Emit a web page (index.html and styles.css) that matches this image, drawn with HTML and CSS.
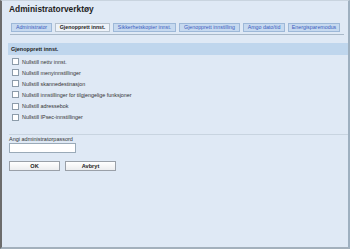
FILE: index.html
```html
<!DOCTYPE html>
<html>
<head>
<meta charset="utf-8">
<link rel="stylesheet" href="styles.css">
</head>
<body>
<div class="frame">
  <div class="title">Administratorverktøy</div>
  <div class="tabs">
    <span class="tab w41">Administrator</span>
    <span class="tab w55 active">Gjenopprett innst.</span>
    <span class="tab w63">Sikkerhetskopier innst.</span>
    <span class="tab w61">Gjenopprett innstilling</span>
    <span class="tab w42">Amgo dato/tid</span>
    <span class="tab w52">Energisparemodus</span>
  </div>
  <div class="band">Gjenopprett innst.</div>
  <div class="list">
    <div class="row"><span class="cb"></span>Nullstill nettv innst.</div>
    <div class="row"><span class="cb"></span>Nullstill menyinnstillinger</div>
    <div class="row"><span class="cb"></span>Nullstill skannedestinasjon</div>
    <div class="row"><span class="cb"></span>Nullstill innstillinger for tilgjengelige funksjoner</div>
    <div class="row"><span class="cb"></span>Nullstill adressebok</div>
    <div class="row"><span class="cb"></span>Nullstill IPsec-innstillinger</div>
  </div>
  <div class="sep"></div>
  <div class="pw">
    <div class="label">Angi administratorpassord</div>
    <div class="input"></div>
  </div>
  <div class="buttons">
    <span class="btn">OK</span>
    <span class="btn">Avbryt</span>
  </div>
</div>
</body>
</html>
```

FILE: styles.css
```css
html, body {
  margin: 0;
  padding: 0;
}
body {
  font-family: "Liberation Sans", Arial, sans-serif;
  background: #dfe9f5;
}
.frame {
  width: 350px;
  height: 249px;
  box-sizing: border-box;
  background: #dfe9f5;
  border-top: 1px solid #c9d4df;
  border-left: 2px solid #6c6c6c;
  border-right: 2px solid #9eb0c0;
  border-bottom: 2px solid #a3b0bc;
  display: flex;
  flex-direction: column;
}
.title {
  padding: 3px 0 0 7px;
  font-size: 8.4px;
  line-height: 11px;
  font-weight: bold;
  color: #1e1e1e;
}
.tabs {
  display: flex;
  gap: 3px;
  margin: 8px 4px 0 8px;
  padding: 0 0 2px 1px;
  border-bottom: 1px solid #a9b9c9;
}
.tab {
  box-sizing: border-box;
  flex: none;
  height: 9px;
  line-height: 7px;
  padding: 0;
  text-align: center;
  font-size: 5.3px;
  color: #3a5cc0;
  background: #c6d9ef;
  border: 1px solid #9db8d8;
  white-space: nowrap;
}
.w41 { width: 41px; }
.w55 { width: 55px; }
.w63 { width: 63px; }
.w61 { width: 61px; }
.w42 { width: 42px; }
.w52 { width: 52px; }
.tab.active {
  background: #eef3f9;
  color: #222;
  font-weight: bold;
  border-color: #b6c2ce;
}
.band {
  margin: 8px 0 0 6px;
  height: 12px;
  line-height: 12px;
  padding-left: 3px;
  background: #bfd6ed;
  font-size: 5.5px;
  font-weight: bold;
  color: #222;
}
.list {
  padding: 1px 0 0 10px;
}
.row {
  height: 11.15px;
  display: flex;
  align-items: center;
  gap: 3px;
  font-size: 5.4px;
  color: #333;
}
.cb {
  box-sizing: border-box;
  width: 7px;
  height: 7px;
  background: #fff;
  border: 1px solid #8d9caa;
}
.sep {
  margin: 11px 0 0 7px;
  height: 1px;
  background: #c8d4e0;
}
.pw {
  padding-left: 7px;
}
.label {
  height: 8px;
  line-height: 9px;
  font-size: 5.5px;
  color: #333;
}
.input {
  box-sizing: border-box;
  width: 67px;
  height: 10px;
  background: #fff;
  border: 1px solid #9aaab8;
}
.buttons {
  display: flex;
  gap: 5px;
  padding-left: 7px;
  margin-top: 8px;
}
.btn {
  box-sizing: border-box;
  width: 51px;
  height: 10px;
  line-height: 8px;
  text-align: center;
  font-size: 5.6px;
  font-weight: bold;
  color: #222;
  background: linear-gradient(#ffffff, #ecedef);
  border: 1px solid #9aa0a8;
}
```
